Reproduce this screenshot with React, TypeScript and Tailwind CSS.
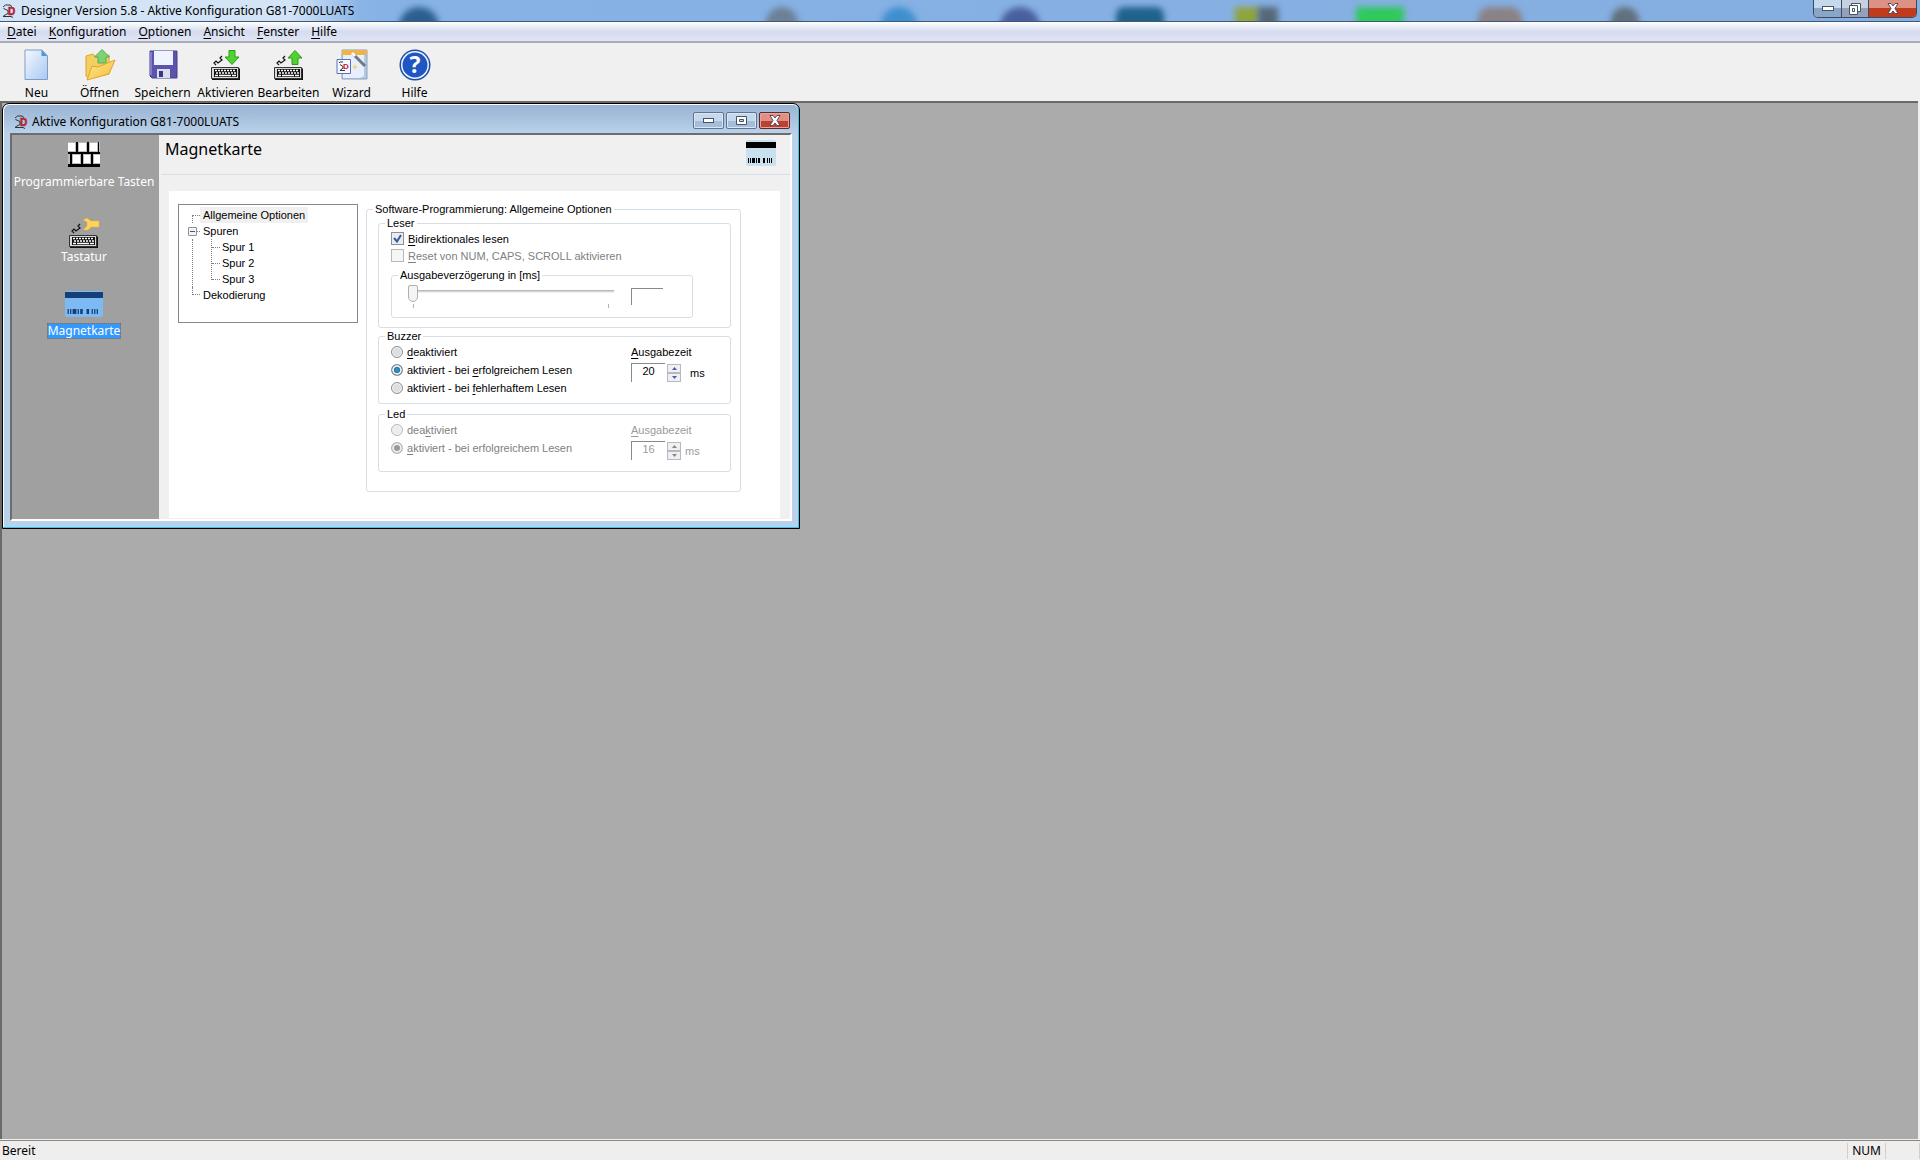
import type { ReactNode } from "react"

// desktop icons shimmering through the glass title bar
const blobs = [
  { left: "20.800%", shape: "w-10 rounded-t-full bg-[#2c5f8f]" },
  { left: "39.900%", shape: "w-8 rounded-t-full bg-[#6d8095]" },
  { left: "45.900%", shape: "w-9 rounded-t-full bg-[#3f8fcf]" },
  { left: "52.100%", shape: "w-10 rounded-t-full bg-[#4a5f9f]" },
  { left: "58.100%", shape: "w-12 rounded-t-lg bg-[#1f628c]" },
  { left: "64.300%", shape: "w-6 bg-[#8fa53c]" },
  { left: "65.500%", shape: "w-5 bg-[#566878]" },
  { left: "70.600%", shape: "w-12 bg-[#2fc95c]" },
  { left: "77%", shape: "w-11 rounded-t-xl bg-[#8a8284]" },
  { left: "83.900%", shape: "w-7 rounded-t-full bg-[#62707c]" },
]

const menus = ["Datei", "Konfiguration", "Optionen", "Ansicht", "Fenster", "Hilfe"]

function Mnemonic({ text, at = 0 }: { text: string; at?: number }) {
  return (
    <span className="whitespace-pre">
      {text.slice(0, at)}
      <span className="underline underline-offset-2">{text[at]}</span>
      {text.slice(at + 1)}
    </span>
  )
}

function Logo() {
  return (
    <svg width="14" height="14" viewBox="0 0 14 14" aria-hidden="true">
      <path d="M1 3L3.500 1H8L10 2.500M1.500 4.500L6 6.500V9.500L3 11L1 12.500H9L11 13.500" fill="none" stroke="#333" />
      <text x="6" y="11" fontSize="10" fontWeight="900" fontFamily="Liberation Sans, sans-serif" fill="#b5202c" stroke="#b5202c" strokeWidth=".5">
        D
      </text>
    </svg>
  )
}

function KeyboardIcon({ children }: { children?: ReactNode }) {
  return (
    <svg width="32" height="32" viewBox="0 0 32 32" aria-hidden="true">
      <path d="M6 16L4 14L6 12L8 14L12 11L10 9L12 7" fill="none" stroke="#111" strokeWidth="1.2" />
      <path d="M2 19H29L30 20V31H2Z" fill="#111" />
      <path d="M1.500 18.500H28.500V29.500H1.500Z" fill="#d9d9d6" stroke="#333" />
      <path d="M4 20H27V28H4Z" fill="#111" />
      <path d="M5 21.500H26M6 24H26" stroke="#fff" strokeWidth="1.5" strokeDasharray="2 1" />
      <path d="M5 26.500H8M9 26.500H21M22 26.500H26" stroke="#fff" strokeWidth="1.5" />
      {children}
    </svg>
  )
}

function NewIcon() {
  return (
    <svg width="32" height="32" viewBox="0 0 32 32" aria-hidden="true">
      <defs>
        <linearGradient id="page" x1="0" y1="0" x2="1" y2="1">
          <stop offset="0" stopColor="#f4f9ff" />
          <stop offset="1" stopColor="#a9c8f2" />
        </linearGradient>
      </defs>
      <path d="M4 1H21L26.500 7V30.500H4Z" fill="url(#page)" stroke="#7f9cc9" />
      <path d="M20.500 1L26.500 7H20.500Z" fill="#4d97e0" />
    </svg>
  )
}

function OpenIcon() {
  return (
    <svg width="32" height="32" viewBox="0 0 32 32" aria-hidden="true">
      <defs>
        <linearGradient id="folder" x1="0" y1="0" x2="1" y2="1">
          <stop offset="0" stopColor="#ffec94" />
          <stop offset="1" stopColor="#f4b934" />
        </linearGradient>
      </defs>
      <path d="M2 7L9 5L12 8L25 6V25L4 29L2 27Z" fill="#f3cf61" stroke="#dca62c" />
      <path d="M18 .5L25.500 8H22V14H14V8H10.500Z" fill="#7fd077" stroke="#55b050" />
      <path d="M8 17L14 18L31 11L25 25L3 31Z" fill="url(#folder)" stroke="#e0a528" />
    </svg>
  )
}

function SaveIcon() {
  return (
    <svg width="32" height="32" viewBox="0 0 32 32" aria-hidden="true">
      <path d="M3 2H30V29H5L3 27Z" fill="#5a55ab" stroke="#46418f" />
      <path d="M7 2H26V16H7Z" fill="#eef3ff" />
      <path d="M4 3V26" stroke="#918bd6" strokeWidth="1.5" />
      <path d="M10 20H23V29H10Z" fill="#d9dcef" />
      <path d="M12 22H16V28H12Z" fill="#39377f" />
    </svg>
  )
}

function WizardIcon() {
  return (
    <svg width="32" height="32" viewBox="0 0 32 32" aria-hidden="true">
      <path d="M6 1H31V30H6Z" fill="#b3c9e2" stroke="#8ba3c2" />
      <path d="M6 1H31V6H6Z" fill="#f0b24a" />
      <path d="M7 6H28V27L24 29H7Z" fill="#e6effb" />
      <path d="M17 5L29 17" stroke="#6f7982" strokeWidth="3" />
      <path d="M16 4L19 7" stroke="#fff" strokeWidth="3" />
      <path d="M19 15L20 17L22 18L20 19L19 21L18 19L16 18L18 17Z" fill="#f5d77a" />
      <path d="M1 10.500H14.500V24.500H1Z" fill="#f6f8ff" stroke="#5872bd" />
      <path d="M3 14L4 13H7M4 15.500L7 17.500V19L4 21.500H9" fill="none" stroke="#333" />
      <text x="7" y="20" fontSize="8" fontWeight="900" fontFamily="Liberation Sans, sans-serif" fill="#c4202c">
        D
      </text>
    </svg>
  )
}

function HelpIcon() {
  return (
    <svg width="32" height="32" viewBox="0 0 32 32" aria-hidden="true">
      <circle cx="16" cy="16" r="15.5" fill="#1b4dab" />
      <circle cx="16" cy="16" r="14" fill="#f1f5ff" />
      <circle cx="16" cy="16" r="12.5" fill="#1f56c4" />
      <text x="16" y="24" fontSize="23" fontWeight="700" textAnchor="middle" fontFamily="Open Sans, sans-serif" fill="#fff">
        ?
      </text>
    </svg>
  )
}

function CardIcon({ selected = false }: { selected?: boolean }) {
  return (
    <svg width={selected ? 38 : 30} height="26" viewBox="0 0 30 26" preserveAspectRatio="none" aria-hidden="true">
      <rect width="30" height="26" rx="2" fill={selected ? "#7db9f2" : "#c9e1ee"} />
      <rect y={selected ? 1 : 2} width="30" height="6" fill={selected ? "#153f78" : "#000"} />
      <path
        d="M2 20.5H3M4 20.5H5M6 20.5H9M10 20.5H11M12 20.5H14M17 20.5H19M21 20.5H22M23 20.5H24M25 20.5H26"
        stroke={selected ? "#153f78" : "#000"}
        strokeWidth="5"
      />
    </svg>
  )
}

function KeysIcon() {
  return (
    <svg width="32" height="25" viewBox="0 0 32 25" aria-hidden="true">
      <rect width="32" height="25" fill="#000" />
      <path d="M0 0H8V10H0ZM10 0H19V10H10ZM21 0H30V10H21ZM31 0H32V10H31ZM0 12H2V22H0ZM4 12H13V22H4ZM15 12H23V22H15ZM25 12H32V22H25Z" fill="#bbb" />
      <path d="M0 1H7V9H0ZM11 1H18V9H11ZM22 1H29V9H22ZM5 13H12V21H5ZM16 13H22V21H16ZM26 13H32V21H26Z" fill="#fff" />
    </svg>
  )
}

const tools = [
  { label: "Neu", icon: <NewIcon /> },
  { label: "Öffnen", icon: <OpenIcon /> },
  { label: "Speichern", icon: <SaveIcon /> },
  {
    label: "Aktivieren",
    icon: (
      <KeyboardIcon>
        <path d="M19 1.500H25V8H29L22 15.500L15 8H19Z" fill="#4fd42f" stroke="#2c9a1d" />
      </KeyboardIcon>
    ),
  },
  {
    label: "Bearbeiten",
    icon: (
      <KeyboardIcon>
        <path d="M19 15.500H25V9H29L22 1.500L15 9H19Z" fill="#4fd42f" stroke="#2c9a1d" />
      </KeyboardIcon>
    ),
  },
  { label: "Wizard", icon: <WizardIcon /> },
  { label: "Hilfe", icon: <HelpIcon /> },
]

function CloseGlyph() {
  return (
    <svg width="12" height="11" viewBox="0 0 12 11">
      <path d="M1 .5H4L6 3L8 .5H11L8 5.500L11 10.500H8L6 8L4 10.500H1L4 5.500Z" fill="#fff" stroke="#5c4a55" />
    </svg>
  )
}

function TitleBar() {
  return (
    <header className="relative flex h-[22px] items-start justify-between overflow-hidden border-b border-[#3f5877] bg-linear-to-r from-[#b9d3ef] via-[#86b2e6] via-20% to-[#86aee0]">
      {blobs.map((blob) => (
        <span key={blob.left} className={`absolute top-[7px] h-6 blur-[3px] ${blob.shape}`} style={{ left: blob.left }} />
      ))}
      <h1 className="relative flex h-[21px] w-[360px] items-center gap-[5px] bg-linear-to-r from-[#d3e4f6] from-80% to-transparent pl-[2px] text-[12px]">
        <Logo />
        Designer Version 5.8 - Aktive Konfiguration G81-7000LUATS
      </h1>
      <div className="relative mr-[3px] flex h-[18px] overflow-hidden rounded-b-[5px] border border-t-0 border-[#3b4a60]">
        <button aria-label="Minimieren" className="flex w-7 items-center justify-center border-r border-[#3b4a60] bg-linear-to-b from-[#c5d8ec] from-50% to-[#8aa6c6] to-50%">
          <svg width="12" height="5"><rect x=".5" y=".5" width="11" height="4" fill="#fff" stroke="#465468" /></svg>
        </button>
        <button aria-label="Wiederherstellen" className="flex w-[27px] items-center justify-center border-r border-[#3b4a60] bg-linear-to-b from-[#c5d0e0] from-50% to-[#96a0b8] to-50%">
          <svg width="12" height="12" fill="#fff" stroke="#465468">
            <path d="M2.500 .5H11.500V8.500H2.500Z" />
            <path d="M.5 2.500H8.500V11.500H.5ZM3.500 5.500H5.500V8.500H3.500Z" fillRule="evenodd" />
          </svg>
        </button>
        <button aria-label="Schließen" className="flex w-[47px] items-center justify-center bg-linear-to-b from-[#dd9184] from-50% to-[#c23a1c] to-50%">
          <CloseGlyph />
        </button>
      </div>
    </header>
  )
}

function Sidebar() {
  return (
    <nav className="flex w-[147px] shrink-0 flex-col items-center bg-[#a0a0a0] pt-[7px] pr-[3px] text-[12px] whitespace-nowrap text-white">
      <a href="#tasten" className="flex h-[75px] flex-col items-center gap-[7px]">
        <KeysIcon />
        Programmierbare Tasten
      </a>
      <a href="#tastatur" className="flex h-[74px] flex-col items-center">
        <KeyboardIcon>
          <path d="M15 3L19 1L23 4H31V10H23L20 13H15L19 9V5Z" fill="#ffd25a" stroke="#e5ad34" strokeWidth=".5" />
        </KeyboardIcon>
        Tastatur
      </a>
      <a href="#magnetkarte" className="flex flex-col items-center gap-[6px]">
        <CardIcon selected />
        <span className="border border-dotted border-[#b06020] bg-[#3399ff] leading-[14px]">Magnetkarte</span>
      </a>
    </nav>
  )
}

function TreeChild({ label }: { label: string }) {
  return (
    <li className="flex h-4 items-center gap-[2px]">
      <span className="w-2 border-t border-dotted border-[#808080]" />
      {label}
    </li>
  )
}

function Tree() {
  return (
    <ul className="h-[119px] w-[180px] shrink-0 border border-[#828790] pt-[2px] pl-[13px]">
      <li className="flex h-4 items-end">
        <span className="h-2 w-2 border-t border-l border-dotted border-[#808080]" />
        <span className="h-4 bg-[#f0f0f0] px-[3px] leading-4">Allgemeine Optionen</span>
      </li>
      <li>
        <div className="-ml-1 flex h-4 items-center">
          <button aria-label="Spuren zuklappen" className="flex h-[9px] w-[9px] items-center justify-center rounded-[1px] border border-[#919191] bg-[#f4f4f4]">
            <span className="h-px w-[5px] bg-[#3b55a0]" />
          </button>
          <span className="w-[3px] border-t border-dotted border-[#808080]" />
          <span className="pl-[3px]">Spuren</span>
        </div>
        <div className="border-l border-dotted border-[#808080] pl-[18px]">
          <ul className="flex">
            <li className="h-[41px] border-l border-dotted border-[#808080]" />
            <li>
              <ul>
                <TreeChild label="Spur 1" />
                <TreeChild label="Spur 2" />
                <TreeChild label="Spur 3" />
              </ul>
            </li>
          </ul>
        </div>
      </li>
      <li className="flex h-4 items-start">
        <span className="h-2 w-2 border-b border-l border-dotted border-[#808080]" />
        <span className="px-[3px] leading-4">Dekodierung</span>
      </li>
    </ul>
  )
}

function Group({ title, className, inner, children }: { title: string; className: string; inner: string; children: ReactNode }) {
  return (
    <fieldset className={`rounded-[3px] border border-[#d5dfe5] ${className}`}>
      <legend className="ml-[6px] px-[2px] leading-[14px]">{title}</legend>
      <div className={inner}>{children}</div>
    </fieldset>
  )
}

function Radio({ name, text, at, checked = false, disabled = false }: { name: string; text: string; at: number; checked?: boolean; disabled?: boolean }) {
  return (
    <label className={`flex h-[18px] items-center gap-1 ${disabled ? "text-[#808080]" : ""}`}>
      <input
        type="radio"
        name={name}
        defaultChecked={checked}
        disabled={disabled}
        className="h-3 w-3 appearance-none rounded-full border border-[#8e8f8f] bg-[#dcdfe2] shadow-[inset_0_0_0_1px_#f4f4f4] checked:bg-radial checked:from-[#2a95c8] checked:from-20% checked:to-[#0f3357] checked:to-60% checked:shadow-[inset_0_0_0_2px_#e8eef4] disabled:border-[#b8b8b8] disabled:bg-[#ededed] disabled:checked:from-[#999] disabled:checked:to-[#999]"
      />
      <Mnemonic text={text} at={at} />
    </label>
  )
}

function TimeField({ id, value, disabled = false }: { id: string; value: string; disabled?: boolean }) {
  const spin = "flex h-[9px] w-[14px] items-center justify-center border border-[#b5b9c4] bg-[#f0f0f0] disabled:text-[#888]"
  return (
    <div className={`w-[92px] ${disabled ? "text-[#9a9a9a]" : ""}`}>
      <label htmlFor={id} className="block h-[18px] leading-[18px]">
        <Mnemonic text="Ausgabezeit" />
      </label>
      <div className="mt-[2px] flex items-center">
        <input id={id} defaultValue={value} disabled={disabled} className="h-[19px] w-[34px] border-t border-l border-[#8a8a8a] pb-1 text-center" />
        <span className="ml-[2px] flex flex-col text-[#4a5fa8]">
          <button aria-label="Mehr" disabled={disabled} className={spin}>
            <svg width="5" height="3" fill="currentColor"><path d="M0 3L2.500 0L5 3Z" /></svg>
          </button>
          <button aria-label="Weniger" disabled={disabled} className={spin}>
            <svg width="5" height="3" fill="currentColor"><path d="M0 0L2.500 3L5 0Z" /></svg>
          </button>
        </span>
        <span className={disabled ? "pl-1" : "pl-[9px]"}>ms</span>
      </div>
    </div>
  )
}

function Options() {
  return (
    <Group title="Software-Programmierung: Allgemeine Optionen" className="-mt-[2px] h-[290px] w-[375px]" inner="pr-[9px] pl-[11px]">
      <Group title="Leser" className="h-[112px]" inner="pl-3">
        <label className="flex h-[17px] items-center gap-1">
          <input type="checkbox" defaultChecked className="h-[13px] w-[13px] appearance-none border border-[#8e8f8f] bg-[#e9edf2]" />
          <svg width="9" height="9" viewBox="0 0 9 9" className="-ml-[15px] mr-[2px]">
            <path d="M1 4L4 7.500L8 1" fill="none" stroke="#3d559c" strokeWidth="2" />
          </svg>
          <Mnemonic text="Bidirektionales lesen" />
        </label>
        <label className="flex h-[17px] items-center gap-1 text-[#808080]">
          <input type="checkbox" disabled className="h-[13px] w-[13px] appearance-none border border-[#b8b8b8] bg-[#f6f6f6]" />
          <Mnemonic text="Reset von NUM, CAPS, SCROLL aktivieren" />
        </label>
        <Group title="Ausgabeverzögerung in [ms]" className="mt-1 h-[50px] w-[302px]" inner="flex pt-[2px] pl-4">
          <div className="w-[206px]">
            <input
              type="range"
              min="0"
              max="100"
              defaultValue="0"
              disabled
              aria-label="Ausgabeverzögerung"
              className="block h-[18px] w-full appearance-none bg-linear-to-b from-transparent from-35% via-[#b4b4b4] via-35% to-transparent to-50% [&::-webkit-slider-thumb]:h-[17px] [&::-webkit-slider-thumb]:w-[10px] [&::-webkit-slider-thumb]:appearance-none [&::-webkit-slider-thumb]:rounded-t-[2px] [&::-webkit-slider-thumb]:rounded-b-[5px] [&::-webkit-slider-thumb]:border [&::-webkit-slider-thumb]:border-[#b0b0b0] [&::-webkit-slider-thumb]:bg-[#f4f4f4]"
            />
            <div className="mt-[2px] ml-[5px] h-1 w-[196px] border-x border-[#b4b4b4]" />
          </div>
          <input aria-label="Ausgabeverzögerung in ms" disabled className="mt-1 ml-[17px] h-[17px] w-8 border-t border-l border-[#8a8a8a]" />
        </Group>
      </Group>
      <Group title="Buzzer" className="mt-[1px] h-[75px]" inner="flex justify-between pr-[7px] pl-3">
        <div>
          <Radio name="buzzer" text="deaktiviert" at={0} />
          <Radio name="buzzer" text="aktiviert - bei erfolgreichem Lesen" at={16} checked />
          <Radio name="buzzer" text="aktiviert - bei fehlerhaftem Lesen" at={16} />
        </div>
        <TimeField id="buzzer-zeit" value="20" />
      </Group>
      <Group title="Led" className="mt-[3px] h-[65px]" inner="flex justify-between pr-[7px] pl-3">
        <div>
          <Radio name="led" text="deaktiviert" at={3} disabled />
          <Radio name="led" text="aktiviert - bei erfolgreichem Lesen" at={0} checked disabled />
        </div>
        <TimeField id="led-zeit" value="16" disabled />
      </Group>
    </Group>
  )
}

function ConfigWindow() {
  const button = "flex h-[17px] w-[31px] items-center justify-center rounded-[2px] border border-[#5d7390] bg-linear-to-b from-[#c6d8ec] from-50% to-[#a3bddb] to-50% shadow-[inset_0_0_0_1px_#d9e6f4]"
  return (
    <section className="flex h-[426px] w-[798px] flex-col rounded-t-[7px] border border-black bg-[#b9d1ea] px-[7px] pb-[7px] shadow-[inset_-1px_-1px_0_#35c5e8,inset_1px_1px_0_#fff]">
      <header className="-mx-[6px] mt-px flex h-[28px] items-center justify-between rounded-t-[6px] bg-linear-to-b from-[#98b3d2] to-[#b9d1ea] pt-[3px] pr-[8px] pl-[10px] text-[12px]">
        <h2 className="flex items-center gap-1 pt-[2px]">
          <Logo />
          Aktive Konfiguration G81-7000LUATS
        </h2>
        <div className="flex gap-[2px]">
          <button aria-label="Minimieren" className={button}>
            <svg width="11" height="5"><rect x=".5" y=".5" width="10" height="4" fill="#fff" stroke="#465468" /></svg>
          </button>
          <button aria-label="Maximieren" className={button}>
            <svg width="11" height="9"><path d="M.5 .5H10.500V8.500H.5ZM3.500 3.500H7.500V5.500H3.500Z" fillRule="evenodd" fill="#fff" stroke="#465468" /></svg>
          </button>
          <button aria-label="Schließen" className="flex h-[17px] w-[31px] items-center justify-center rounded-[2px] border border-[#5b2a2a] bg-linear-to-b from-[#dd9184] from-50% to-[#bf4030] to-50% shadow-[inset_0_0_0_1px_#e5a59c]">
            <CloseGlyph />
          </button>
        </div>
      </header>
      <div className="flex min-h-0 flex-1 border-2 border-t-[#6d6d6d] border-r-white border-b-white border-l-[#6d6d6d] bg-[#f0f0f0]">
        <Sidebar />
        <div className="flex flex-1 flex-col">
          <div className="ml-[2px] flex h-10 items-start justify-between border-b border-[#d5dfe5] pr-[14px] pl-1">
            <h3 className="pt-[2px] text-[16px] leading-6">Magnetkarte</h3>
            <span className="pt-[5px]"><CardIcon /></span>
          </div>
          <div className="mt-4 mr-[10px] mb-px ml-[10px] flex flex-1 gap-2 bg-white pt-[13px] pl-[9px] font-['Liberation_Sans',Arial,sans-serif] text-[11px]">
            <Tree />
            <Options />
          </div>
        </div>
      </div>
    </section>
  )
}

export default function App() {
  return (
    <div className="flex min-h-screen flex-col bg-[#f0f0f0] font-['Noto_Sans','Open_Sans',sans-serif] text-[12px] leading-4 text-black">
      <TitleBar />
      <nav className="flex h-[21px] items-center gap-3 border-b-2 border-[#a9adb8] bg-linear-to-b from-white via-[#d6dcef] via-50% to-[#e0e5f5] pl-[7px]">
        {menus.map((menu) => (
          <button key={menu}>
            <Mnemonic text={menu} />
          </button>
        ))}
      </nav>
      <div className="flex h-[58px] items-start pt-[6px] pl-[5px]">
        {tools.map((tool) => (
          <button key={tool.label} className="flex w-[63px] flex-col items-center gap-1">
            {tool.icon}
            {tool.label}
          </button>
        ))}
      </div>
      <main className="mr-[2px] flex-1 border-t-2 border-l-2 border-[#696969] bg-[#ababab]">
        <ConfigWindow />
      </main>
      <footer className="mt-[1px] flex h-5 items-center justify-between border-t border-[#888] bg-[#f0eded]">
        <span className="pl-[2px]">Bereit</span>
        <div className="flex h-4">
          <span className="border-x border-[#d0d0d0] px-1">NUM</span>
          <span className="w-[34px] border-r border-[#d0d0d0]" />
        </div>
      </footer>
    </div>
  )
}
